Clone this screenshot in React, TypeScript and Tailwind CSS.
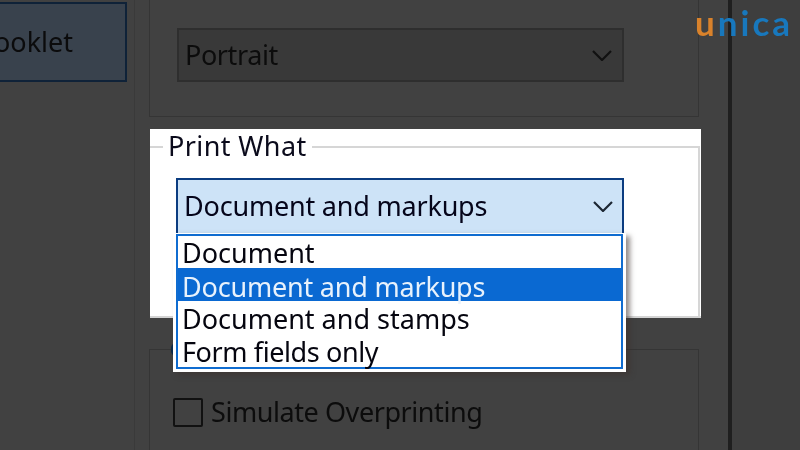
import React from 'react'

const fontClass = "font-['Noto_Sans','Open_Sans',sans-serif]"

const options = [
  { label: 'Document', row: 'h-[32px] leading-[34px] pl-[4px] tracking-[0px]' },
  { label: 'Document and markups', row: 'h-[33px] leading-[37px] pl-[4px] tracking-[-0.2px] bg-[#0a69d2] text-[#e8f2fc]' },
  { label: 'Document and stamps', row: 'h-[33px] leading-[36px] pl-[4px] tracking-[0px]' },
  { label: 'Form fields only', row: 'h-[33px] leading-[35px] pl-[4px] tracking-[-0.4px]' },
]

const Chevron = ({ className }: { className: string }) => (
  <svg viewBox="0 0 20 11" className={className} fill="none" stroke="currentColor" strokeWidth="2.2">
    <path d="M1 1l9 9 9-9" />
  </svg>
)

const App = () => {
  return (
    <div className={`relative flex h-[450px] w-[800px] overflow-hidden bg-[#414141] blur-[0.4px] ${fontClass}`}>
      {/* left column, cut off by the crop */}
      <div className="h-full w-[135px] shrink-0 border-r border-[#3a3a3a] pt-[2px]">
        <div className="ml-[-20px] flex h-[80px] w-[147px] items-center justify-end border-2 border-[#0f2238] bg-[#39424d] pr-[52px] text-[27px] text-[#0b0b0c]">
          Booklet
        </div>
      </div>

      {/* middle column */}
      <div className="ml-[14px] flex w-[552px] shrink-0 flex-col">
        <div className="h-[117px] w-[550px] shrink-0 border-x border-b border-[#353535] pl-[27px] pt-[28px]">
          <div className="flex h-[54px] w-[447px] items-center justify-between border-2 border-[#2e2e2e] bg-[#393939] pl-[6px] pr-[10px] text-[27px] tracking-[-0.4px] text-[#0c0c0c]">
            <span>Portrait</span>
            <Chevron className="h-[11px] w-[20px] text-[#111111]" />
          </div>
        </div>

        <div className="ml-[1px] mt-[12px] flex h-[189px] w-[551px] shrink-0 flex-col border-b-2 border-[#d4d4d4] bg-white">
          <div className="mr-[1px] flex h-[34px] shrink-0 items-end">
            <div className="mb-[15px] h-[2px] w-[13px] bg-[#d6d6d6]" />
            <span className="px-[5px] text-[27px] leading-[34px] tracking-[0.4px] text-[#0b0b1c]">Print What</span>
            <div className="h-[17px] flex-1 border-r-2 border-t-2 border-[#d6d6d6]" />
          </div>
          <div className="mr-[1px] flex-1 border-r-2 border-[#d6d6d6] pl-[26px] pt-[15px]">
            <div className="flex h-[57px] w-[448px] items-center justify-between border-2 border-[#0b3c80] bg-[#cde3f7] pl-[6px] pr-[9px] text-[27px] tracking-[-0.2px] text-[#05051a]">
              <span>Document and markups</span>
              <Chevron className="h-[11px] w-[20px] text-[#1c2733]" />
            </div>
          </div>
        </div>

        <div className="mt-[31px] flex h-[110px] w-[550px] shrink-0 flex-col border-x border-t border-[#353535] pl-[23px] pt-[42px]">
          <label className="flex items-center gap-[8px] text-[27px] tracking-[-0.43px] text-[#0c0c0c]">
            <span className="h-[29px] w-[30px] shrink-0 rounded-[2px] border-2 border-[#111111]" />
            Simulate Overprinting
          </label>
        </div>
      </div>

      {/* right divider */}
      <div className="ml-[27px] h-full w-[4px] shrink-0 bg-[#1f1f1f]" />
      <div className="flex-1 bg-[#3e3e3e]" />

      {/* sliver of the lower group's legend, peeking out behind the list */}
      <div className="absolute left-[171px] top-[343px] h-[13px] w-[5px] rounded-l-full border-l-[3px] border-[#0c2a4a]" />

      {/* open list */}
      <div className="absolute left-[173px] top-[233px] w-[453px] bg-white px-[3px] pb-[3px] pt-[1px] shadow-[4px_3px_5px_rgba(60,50,45,0.55)]">
        <ul className="flex h-[135px] flex-col border-2 border-[#0f6cd0] bg-white text-[27px] text-[#05050f]">
          {options.map((option) => (
            <li key={option.label} className={option.row}>
              {option.label}
            </li>
          ))}
        </ul>
      </div>

      {/* logo */}
      <div className="absolute left-[695px] top-[2px] font-['Lato',sans-serif] text-[35px] font-bold leading-[40px] tracking-[3px]">
        <span className="text-[#d9822b]">u</span>
        <span className="text-[#1878bd]">nica</span>
      </div>
    </div>
  )
}

export default App
